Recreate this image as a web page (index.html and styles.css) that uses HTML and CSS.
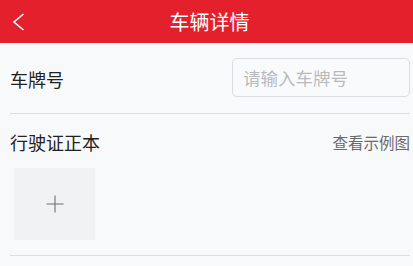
FILE: index.html
```html
<!DOCTYPE html>
<html lang="zh-CN">
<head>
<meta charset="utf-8">
<title>车辆详情</title>
<link rel="stylesheet" href="styles.css">
</head>
<body>
<header class="nav">
  <span class="nav-back">
    <svg width="13" height="18" viewBox="0 0 13 18"><polyline points="11.5,1 2,9 11.5,17" fill="none" stroke="#fff" stroke-width="1.6" stroke-linejoin="miter"/></svg>
  </span>
  <h1 class="nav-title">车辆详情</h1>
  <span class="nav-side"></span>
</header>
<main class="content">
  <div class="row row-plate">
    <span class="label">车牌号</span>
    <div class="input">请输入车牌号</div>
  </div>
  <div class="row row-license">
    <div class="license-head">
      <span class="label">行驶证正本</span>
      <span class="example">查看示例图</span>
    </div>
    <div class="upload">
      <svg width="18" height="18" viewBox="0 0 18 18"><path d="M9 0.5V17.5M0.5 9H17.5" stroke="#6f6f6f" stroke-width="1.1" fill="none"/></svg>
    </div>
  </div>
</main>
</body>
</html>
```
FILE: styles.css
```css
* { box-sizing: border-box; }
html, body { margin: 0; padding: 0; }
body {
  background: #f8f9fb;
  font-family: "Noto Sans CJK SC", "Noto Sans", sans-serif;
  width: 413px;
  height: 266px;
  overflow: hidden;
}
.nav {
  height: 43px;
  background: #e3202b;
  display: grid;
  grid-template-columns: 60px 1fr 60px;
  align-items: center;
}
.nav-back {
  display: flex;
  align-items: center;
  padding-left: 12px;
  height: 43px;
}
.nav-back svg { display: block; }
.nav-title {
  margin: 0;
  text-align: center;
  color: #fff;
  font-size: 20px;
  font-weight: 400;
  line-height: 43px;
  padding-left: 6px;
}
.content {
  padding: 0 3px 0 10px;
}
.row { border-bottom: 1px solid #dcdde0; }
.row-plate {
  height: 71px;
  display: flex;
  align-items: center;
  justify-content: space-between;
  padding-top: 1px;
}
.label {
  font-size: 18px;
  color: #222;
  line-height: 24px;
}
.input {
  width: 178px;
  height: 39px;
  border: 1px solid #dcdde0;
  border-radius: 5px;
  background: #f9fafc;
  color: #b9babd;
  font-size: 17.5px;
  line-height: 37px;
  padding-left: 10px;
  margin-bottom: 2px;
}
.row-license {
  padding: 16px 0 15px;
}
.license-head {
  display: flex;
  justify-content: space-between;
  align-items: center;
  height: 24px;
}
.example {
  font-size: 15.5px;
  color: #6a6a6a;
  line-height: 24px;
}
.upload {
  margin: 14px 0 0 4px;
  width: 81px;
  height: 72px;
  background: #f1f2f4;
  display: flex;
  align-items: center;
  justify-content: center;
}
.upload svg { display: block; }
```
